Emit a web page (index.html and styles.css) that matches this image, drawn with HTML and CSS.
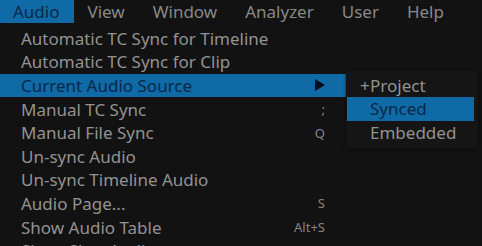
FILE: index.html
```html
<!DOCTYPE html>
<html lang="en">
<head>
    <meta charset="UTF-8">
    <title>Audio Menu</title>
    <link rel="stylesheet" href="styles.css">
</head>
<body>
    <div class="menubar">
        <span class="top-item active">Audio</span>
        <span class="top-item">View</span>
        <span class="top-item">Window</span>
        <span class="top-item">Analyzer</span>
        <span class="top-item">User</span>
        <span class="top-item">Help</span>
    </div>

    <div class="menus">
        <ul class="menu">
            <li><span>Automatic TC Sync for Timeline</span></li>
            <li><span>Automatic TC Sync for Clip</span></li>
            <li class="selected"><span>Current Audio Source</span><span class="arrow"></span></li>
            <li><span>Manual TC Sync</span><span class="key">;</span></li>
            <li><span>Manual File Sync</span><span class="key">Q</span></li>
            <li><span>Un-sync Audio</span></li>
            <li><span>Un-sync Timeline Audio</span></li>
            <li><span>Audio Page...</span><span class="key">S</span></li>
            <li><span>Show Audio Table</span><span class="key">Alt+S</span></li>
            <li><span>Show Shot Audio</span><span class="key">Shift+W</span></li>
        </ul>

        <ul class="submenu">
            <li><span class="check">+</span>Project</li>
            <li class="selected"><span class="check"></span>Synced</li>
            <li><span class="check"></span>Embedded</li>
        </ul>
    </div>
</body>
</html>
```

FILE: styles.css
```css
body {
    margin: 0;
    background-color: #121212;
    font-family: "Noto Sans", sans-serif;
    color: #929292;
    overflow: hidden;
    width: 482px;
    height: 246px;
}
/* top bar */
.menubar {
    display: flex;
    height: 23px;
    font-size: 17px;
    line-height: 23px;
}
.top-item {
    padding: 0 14px 0 13px;
    margin-right: 1px;
    color: #888888;
}
.top-item.active {
    background-color: #0f6aa6;
    color: #0a2847;
}
.menus {
    display: flex;
    align-items: flex-start;
}
ul {
    list-style: none;
    margin: 0;
    padding: 0;
}
/* main drop-down */
.menu {
    width: 346px;
    padding-top: 3.5px;
    font-size: 17px;
}
.menu li {
    display: flex;
    justify-content: space-between;
    align-items: center;
    height: 23.6px;
    padding: 0 21px 0 21px;
    box-sizing: border-box;
    white-space: nowrap;
}
.key {
    font-size: 13px;
    color: #858585;
}
.selected {
    background-color: #0f6aa6;
    color: #0a2847;
}
.arrow {
    width: 0;
    height: 0;
    border-top: 6.5px solid transparent;
    border-bottom: 6.5px solid transparent;
    border-left: 10px solid #05101c;
}
/* sub menu */
.submenu {
    width: 127px;
    margin-top: 47.5px;
    padding: 3px 4px 4px 1px;
    background-color: #151515;
    box-shadow: 0 0 3px rgba(0, 0, 0, 0.6);
    font-size: 17px;
}
.submenu li {
    display: flex;
    align-items: center;
    height: 23.6px;
    padding-left: 13px;
}
.check {
    width: 10px;
}
```
